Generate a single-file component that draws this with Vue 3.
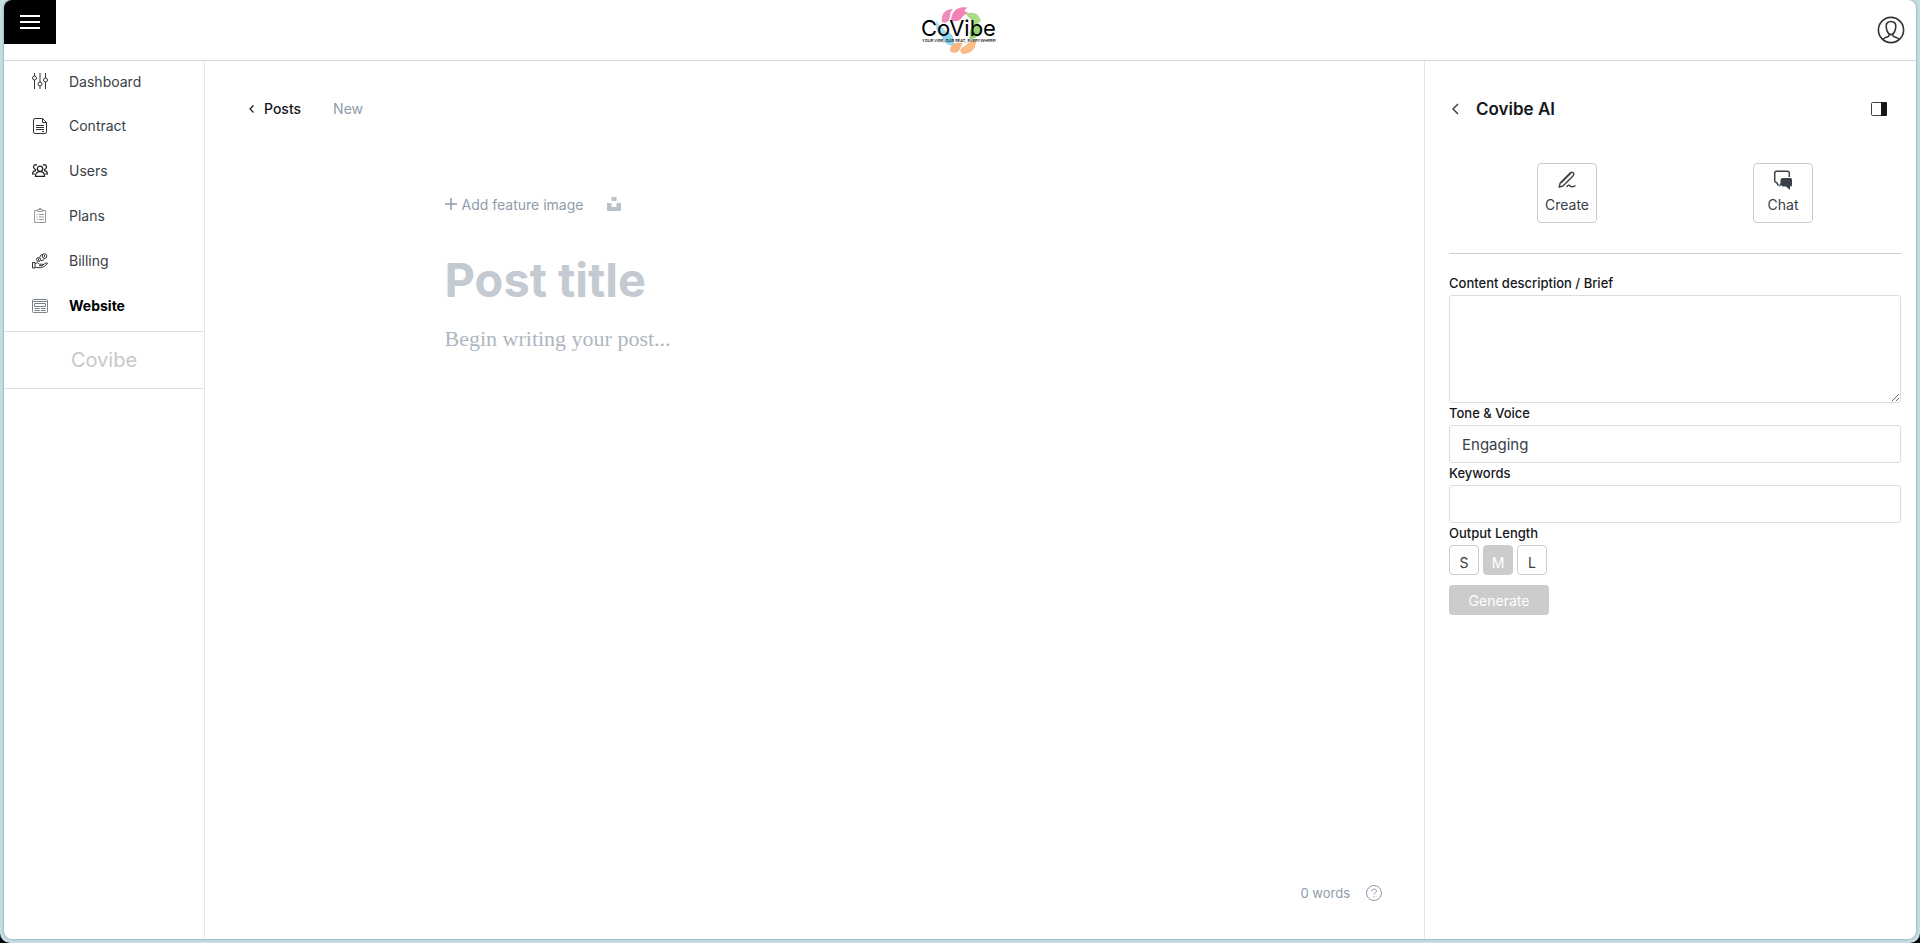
<script setup>
import { ref } from 'vue'

const menu = ['Dashboard', 'Contract', 'Users', 'Plans', 'Billing', 'Website']
const lengths = ['S', 'M', 'L']

const current = ref('Website')
const postTitle = ref('')
const postBody = ref('')
const brief = ref('')
const tone = ref('Engaging')
const keywords = ref('')
const outputLength = ref('M')

function wordCount() {
  const text = postBody.value.trim()
  return text ? text.split(/\s+/).length : 0
}
</script>

<template>
  <div class="frame">
    <div class="app">
      <header class="topbar">
        <button class="menu-btn" aria-label="Menu">
          <span></span><span></span><span></span>
        </button>
        <a class="logo" href="#" aria-label="CoVibe">
          <svg width="80" height="50" viewBox="0 0 80 50">
            <path d="M22 17C21 9 25 4 33 4c-4 4-2 9-5 12-2 2-4 2-6 1z" fill="#ee8dba" />
            <path d="M31 15C32 6 37 1 47 2.500c-1 2-3 2-2 4 1 1 3 0 3 2-3 0-4 2-6 4-3 4-7 5-11 2.500z" fill="#f283b4" />
            <path d="M46 9c7-3 14 0 15 8-2-1-3 1-2 4-4 2-6-1-7-4-1-4-4-4-6-8z" fill="#a9dc86" />
            <path d="M54 20c6-1 8 3 6 8-2 4-6 6-11 6 2-3 0-5 1-8 1-3 2-4 4-6z" fill="#94d274" />
            <path d="M17 15c-3 8 0 14 8 17 1-4 1-7-2-9-3-2-5-4-6-8z" fill="#a8e0f2" />
            <path d="M21 28c5-3 10-1 12 4 1 4 1 7 3 9-9 0-14-4-15-13z" fill="#8ed4ec" />
            <path d="M30 46c0-6 5-10 13-8-2 2-2 4-3 6-2 4-6 5-10 2z" fill="#f8b581" />
            <path d="M40 46c1-4 4-4 6-6 3-3 6-5 10-4 0 8-5 13-14 13 0-1-1-2-2-3z" fill="#f9bd87" />
            <text x="1" y="31" class="logo-name">CoVibe</text>
            <text x="2" y="37" class="logo-tag">YOUR VIBE, OUR BEAT, EVERYWHERE!</text>
          </svg>
        </a>
        <button class="profile-btn" aria-label="Account">
          <svg width="28" height="28" viewBox="0 0 28 28" fill="none" stroke="#333" stroke-width="1.6">
            <circle cx="14" cy="14" r="12.6" />
            <path d="M12 18.500v1c0 2-5 1.600-6 4M16 18.500v1c0 2 5 1.600 6 4" />
            <path d="M14 5.500c-3.400 0-5 2-4.800 5.200.1 1.600.4 3 1 4.400C11 17 12 18.600 14 18.600s3-1.600 3.800-3.500c.6-1.400.9-2.800 1-4.400.2-3.200-1.400-5.200-4.800-5.200z" />
          </svg>
        </button>
      </header>

      <div class="columns">
        <aside class="sidebar">
          <nav>
            <a
              v-for="item in menu"
              :key="item"
              href="#"
              class="nav-item"
              :class="{ active: item === current }"
              @click.prevent="current = item"
            >
              <svg width="16" height="16" viewBox="0 0 16 16" fill="none" stroke="#333">
                <g v-if="item === 'Dashboard'">
                  <path d="M2.500 0v3M2.500 7v9M8 0v9M8 13v3M13.500 0v5M13.500 9v7" />
                  <circle cx="2.500" cy="5" r="2" />
                  <circle cx="8" cy="11" r="2" />
                  <circle cx="13.500" cy="7" r="2" />
                </g>
                <g v-else-if="item === 'Contract'">
                  <path d="M1.500 2q0-1.500 1.500-1.500h7.500l4 4V14q0 1.500-1.500 1.500H3q-1.500 0-1.500-1.500z" />
                  <path d="M10.500.5v4h4M4 7.500h8M4 9.500h8M4 11.500h8M10 13.500h2" />
                </g>
                <g v-else-if="item === 'Users'" stroke="#222" stroke-width="1.200">
                  <circle cx="8" cy="5.800" r="2.600" />
                  <path d="M3.500 13.400c0-3 2-4.700 4.500-4.700s4.500 1.700 4.500 4.700z" />
                  <path d="M5 2.400C3.600.8 1.400 2 1.600 4c.1 1.600 1.200 2.500 2.700 2.400M4 7.600C1.800 7.600.600 9 .6 11h2.600M11 2.400c1.400-1.600 3.600-.4 3.400 1.600-.1 1.600-1.200 2.500-2.700 2.400M12 7.600c2.200 0 3.400 1.400 3.400 3.400h-2.600" />
                </g>
                <g v-else-if="item === 'Plans'" stroke="#999">
                  <path d="M5.500 2.500h-3v12h11v-12h-3M5.500 1.500h5v2h-5zM4.500 6.500h1M7 6.500h5M4.500 9h1M7 9h5M4.500 11.500h1M7 11.500h5" />
                  <path d="M7 .5h2" />
                </g>
                <g v-else-if="item === 'Billing'">
                  <path d="M.5 9.500h2.500v5.500H.5zM3 10.500c2-1 3.500-.5 4.500.7h2.500c1 0 1 1.500 0 1.500H7M10.500 12l3.500-2c1.500-.6 2 .3 1 1.200-3 3-7 4.300-12 3" />
                  <circle cx="6.500" cy="6.500" r="2" />
                  <circle cx="12.500" cy="3" r="2.300" />
                  <path d="M8 4.500c0-2 1-3 3-3M9 7.500c2 0 3-.6 3.500-2M6.500 5.500v2M12.500 2v2" />
                </g>
                <g v-else stroke="#7d8288">
                  <rect x=".5" y="1.500" width="15" height="13" rx="1" />
                  <path d="M1 3.500h14M2.500 5.500h11v3h-11zM2.500 10.500h5M9 10.500h4.500M2.500 12.500h5M9 12.500h4.500" />
                </g>
              </svg>
              <span>{{ item }}</span>
            </a>
          </nav>
          <div class="brand">Covibe</div>
        </aside>

        <main class="editor">
          <div class="crumbs">
            <a href="#" class="back">
              <svg width="5" height="8" viewBox="0 0 5 8" fill="none" stroke="#15171a" stroke-width="1.200">
                <path d="M4.500.5L1 4l3.500 3.500" />
              </svg>
              Posts
            </a>
            <span class="status">New</span>
          </div>

          <div class="canvas">
            <div class="feature">
              <button class="feature-btn">
                <svg width="12" height="12" viewBox="0 0 12 12" stroke="#8e9cac" stroke-width="1.500">
                  <path d="M6 0v12M0 6h12" />
                </svg>
                Add feature image
              </button>
              <button class="unsplash-btn" aria-label="Unsplash">
                <svg width="14" height="14" viewBox="0 0 14 14" fill="#b9c1c9">
                  <path d="M4.500 0h5v4h-5zM0 6h4.500v4h5V6H14v8H0z" />
                </svg>
              </button>
            </div>
            <input v-model="postTitle" class="post-title" placeholder="Post title" aria-label="Post title" />
            <textarea v-model="postBody" class="post-body" placeholder="Begin writing your post..." aria-label="Post body"></textarea>
          </div>

          <footer class="editor-foot">
            <span>{{ wordCount() }} words</span>
            <button class="help-btn" aria-label="Help">
              <svg width="16" height="16" viewBox="0 0 16 16" fill="none" stroke="#8e9cac">
                <circle cx="8" cy="8" r="7.500" />
                <path d="M5.800 6.300C5.800 3.200 10.500 3.400 10.500 6c0 1.800-2.500 1.700-2.500 3.600M8 11v1.200" />
              </svg>
            </button>
          </footer>
        </main>

        <section class="panel">
          <div class="panel-head">
            <button class="icon-btn" aria-label="Back">
              <svg width="7" height="12" viewBox="0 0 7 12" fill="none" stroke="#394047" stroke-width="1.500">
                <path d="M6 1L1 6l5 5" />
              </svg>
            </button>
            <h2>Covibe AI</h2>
            <button class="icon-btn toggle" aria-label="Toggle panel">
              <svg width="16" height="14" viewBox="0 0 16 14">
                <rect x=".5" y=".5" width="15" height="13" rx="1" fill="none" stroke="#394047" />
                <path d="M10 0h5q1 0 1 1v12q0 1-1 1h-5z" fill="#15171a" />
              </svg>
            </button>
          </div>

          <div class="modes">
            <button class="mode">
              <svg width="20" height="20" viewBox="0 0 20 20" fill="none" stroke="#394047" stroke-width="1.400" stroke-linejoin="round" stroke-linecap="round">
                <path d="M2.200 17.200l1-4.200L13.600 2.600q1.400-1 2.600.2t.2 2.600L6 16zM4.500 12.500l9.500-9.500M10 16.500q1.800-2.200 3.200-.5t4.800-.2" />
              </svg>
              Create
            </button>
            <button class="mode">
              <svg width="20" height="20" viewBox="0 0 20 20">
                <path d="M5.500 15.500L3.500 12.500q-1.800-.2-1.800-1.800V3q0-1.800 1.800-1.800h11Q16.300 1.200 16.300 3v4" fill="none" stroke="#394047" stroke-width="1.500" />
                <path d="M10 8h7.500Q19 8 19 9.500v5.500q0 1.500-1.500 1.500H17V20l-4-3.500h-3q-1.500 0-1.500-1.500L5.500 17l2-4V9.500Q7.500 8 10 8z" fill="#394047" />
              </svg>
              Chat
            </button>
          </div>

          <form class="ai-form" @submit.prevent>
            <label for="brief">Content description / Brief</label>
            <textarea id="brief" v-model="brief" class="field"></textarea>
            <label for="tone">Tone &amp; Voice</label>
            <input id="tone" v-model="tone" class="field" type="text" />
            <label for="keywords">Keywords</label>
            <input id="keywords" v-model="keywords" class="field" type="text" />
            <span id="length-label" class="form-label">Output Length</span>
            <div class="lengths" role="group" aria-labelledby="length-label">
              <button
                v-for="l in lengths"
                :key="l"
                type="button"
                :class="{ selected: l === outputLength }"
                @click="outputLength = l"
              >{{ l }}</button>
            </div>
            <button type="submit" class="generate">Generate</button>
          </form>
        </section>
      </div>
    </div>
  </div>
</template>

<style>
html {
  background: #000;
}

body {
  margin: 0;
}
</style>

<style scoped>
* {
  box-sizing: border-box;
}

.frame {
  display: flex;
  min-height: 100vh;
  padding: 0 4px 4px;
  background: #c5dfe3;
  border-radius: 0 0 10px 10px;
  font-family: Inter, "Liberation Sans", sans-serif;
  font-size: 14px;
  color: #394047;
}

.app {
  flex: 1;
  display: flex;
  flex-direction: column;
  overflow: hidden;
  background: #fff;
  border-radius: 8px;
  box-shadow: 0 0 3px rgba(0, 50, 60, 0.4);
}

button {
  padding: 0;
  border: 0;
  background: none;
  font: inherit;
  color: inherit;
  cursor: pointer;
}

a {
  color: inherit;
  text-decoration: none;
}

svg {
  display: block;
  flex-shrink: 0;
}

/* 顶栏 */
.topbar {
  display: grid;
  grid-template-columns: 1fr auto 1fr;
  height: 61px;
  border-bottom: 1px solid #d6d6d6;
}

.menu-btn {
  display: flex;
  flex-direction: column;
  align-items: center;
  justify-content: center;
  gap: 4px;
  width: 52px;
  height: 44px;
  background: #000;
}

.menu-btn span {
  width: 20px;
  height: 2px;
  background: #fff;
}

.logo {
  padding-top: 5px;
}

.logo-name {
  font-size: 22px;
  fill: #000;
}

.logo-tag {
  font-size: 4px;
  font-weight: 500;
  fill: #000;
}

.profile-btn {
  justify-self: end;
  align-self: center;
  margin-right: 11px;
}

.columns {
  flex: 1;
  display: flex;
}

/* 左侧菜单 */
.sidebar {
  width: 201px;
  border-right: 1px solid #e5e5e5;
}

.nav-item {
  display: flex;
  align-items: center;
  gap: 21px;
  height: 45px;
  padding-left: 28px;
}

.nav-item:first-child {
  height: 42px;
  padding-bottom: 2px;
}

.nav-item.active {
  font-weight: 700;
  color: #000;
}

.brand {
  margin-top: 3px;
  border: solid #e0e0e0;
  border-width: 1px 0;
  font-size: 20px;
  line-height: 56px;
  text-align: center;
  color: #c8c8c8;
}

/* 编辑区 */
.editor {
  flex: 1;
  display: flex;
  flex-direction: column;
}

.crumbs {
  display: flex;
  gap: 32px;
  padding: 38px 44px 0;
  line-height: 20px;
}

.back {
  display: flex;
  align-items: center;
  gap: 10px;
  font-weight: 500;
  color: #15171a;
}

.status,
.feature-btn,
.editor-foot {
  color: #8e9cac;
}

.canvas {
  flex: 1;
  display: flex;
  flex-direction: column;
  width: 100%;
  max-width: 740px;
  margin: 0 auto;
  padding-top: 74px;
}

.feature,
.feature-btn {
  display: flex;
  align-items: center;
}

.feature {
  gap: 24px;
  height: 22px;
}

.feature-btn {
  gap: 5px;
}

.post-title,
.post-body {
  padding: 0;
  border: 0;
  outline: 0;
  background: none;
}

.post-title {
  height: 60px;
  margin-top: 35px;
  font: 700 47px/60px Inter, "Liberation Sans", sans-serif;
  color: #15171a;
}

.post-title::placeholder {
  color: #c3cad1;
  opacity: 1;
}

.post-body {
  flex: 1;
  margin-top: 13px;
  font: 22px/32px Georgia, "Liberation Serif", serif;
  color: #15171a;
  resize: none;
}

.post-body::placeholder {
  color: #aeb7c1;
  opacity: 1;
}

.editor-foot {
  display: flex;
  align-items: center;
  justify-content: flex-end;
  gap: 16px;
  padding: 0 42px 38px 0;
  font-size: 13px;
}

/* AI 面板 */
.panel {
  width: 492px;
  padding: 0 15px 0 24px;
  border-left: 1px solid #e1e4e8;
}

.panel-head {
  display: flex;
  align-items: center;
  padding: 36px 14px 0 3px;
}

.panel-head h2 {
  flex: 1;
  margin: 0 0 0 17px;
  font-size: 17px;
  line-height: 24px;
  font-weight: 600;
  color: #15171a;
}

.modes {
  display: flex;
  justify-content: space-around;
  padding: 42px 10px 30px;
  border-bottom: 1px solid #ccc;
}

.mode {
  display: flex;
  flex-direction: column;
  align-items: center;
  gap: 5px;
  width: 60px;
  height: 60px;
  padding-top: 6px;
  border: 1px solid #ccc;
  border-radius: 4px;
  line-height: 20px;
}

.ai-form {
  display: flex;
  flex-direction: column;
  padding-top: 19px;
}

label,
.form-label {
  height: 22px;
  font-size: 13px;
  font-weight: 500;
  line-height: 20px;
  color: #15171a;
}

.field {
  height: 38px;
  padding: 6px 12px;
  border: 1px solid #dadcde;
  border-radius: 3px;
  outline: 0;
  background: #fff;
  font: 15px/24px Inter, "Liberation Sans", sans-serif;
  color: #394047;
}

textarea.field {
  height: 108px;
  resize: vertical;
}

.lengths {
  display: flex;
  gap: 4px;
}

.lengths button {
  width: 30px;
  height: 30px;
  padding-top: 5px;
  border: 1px solid #ccc;
  border-radius: 4px;
}

.lengths .selected {
  background: #ccc;
  color: #fff;
}

.generate {
  align-self: flex-start;
  width: 100px;
  height: 30px;
  margin-top: 10px;
  border-radius: 4px;
  background: #ccc;
  color: #fff;
}
</style>
